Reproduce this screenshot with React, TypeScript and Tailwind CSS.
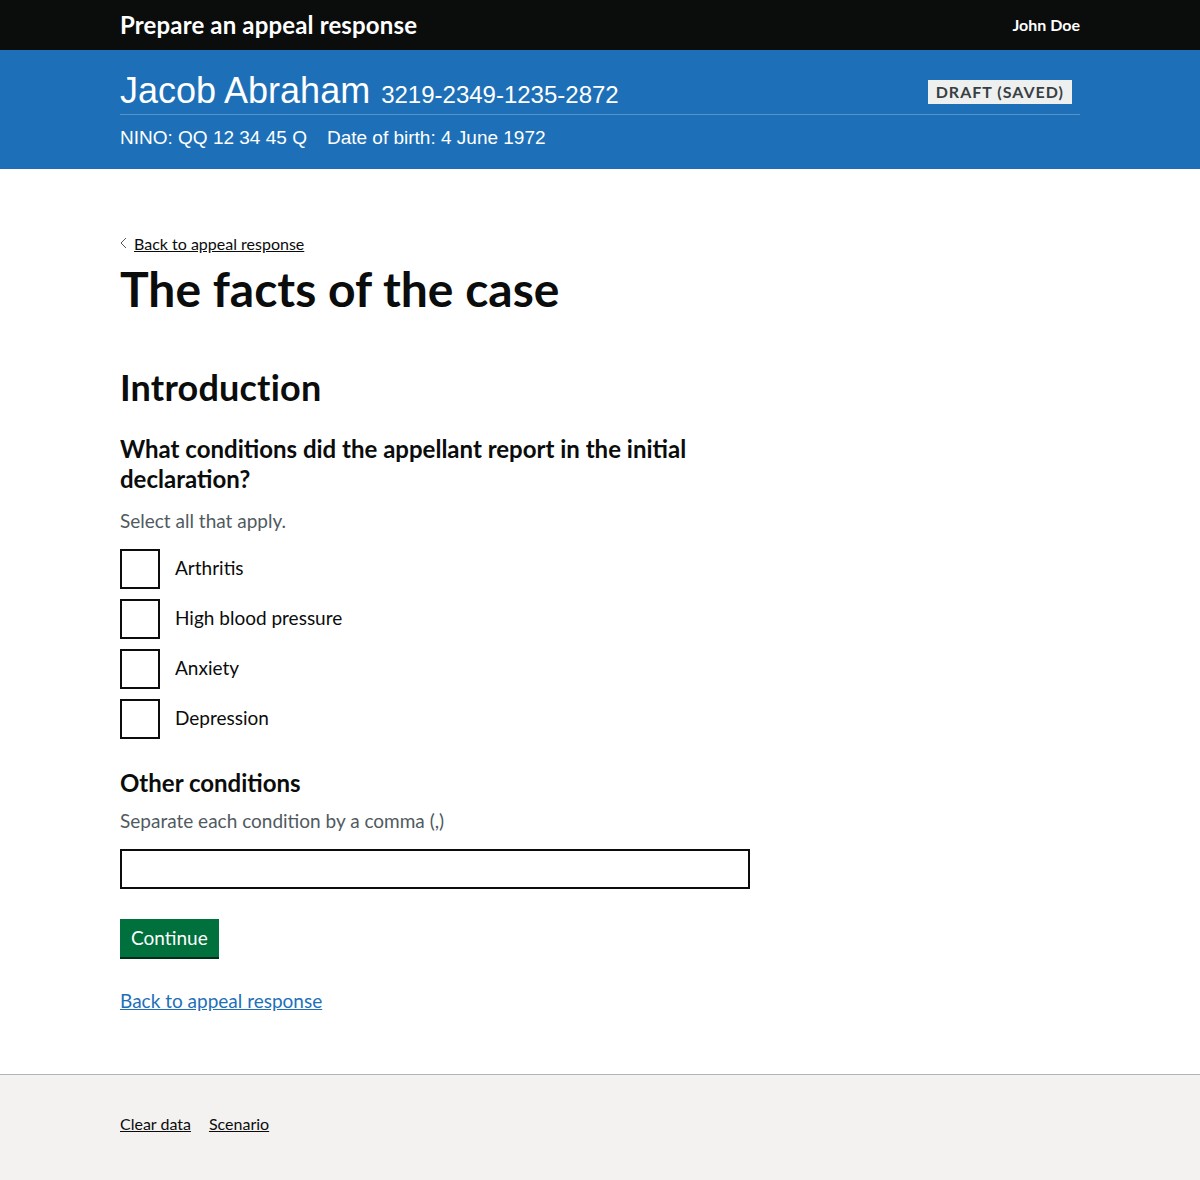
const gds = "font-['Lato','Noto_Sans',sans-serif]";

function Checkbox({ label }: { label: string }) {
  return (
    <label className="flex items-center">
      <span className="w-10 h-10 border-2 border-[#0b0c0c] bg-white shrink-0" />
      <span className="pl-[15px] text-[19px] text-[#0b0c0c]">{label}</span>
    </label>
  );
}

export default function App() {
  return (
    <div className={`min-h-[1180px] bg-white flex flex-col ${gds}`}>
      {/* Header */}
      <header className="bg-[#0b0c0c] h-[50px]">
        <div className="max-w-[960px] mx-auto h-full flex items-center justify-between">
          <span className="text-white font-bold text-[24px] tracking-[0.15px]">Prepare an appeal response</span>
          <span className="text-white font-bold text-[16px]">John Doe</span>
        </div>
      </header>

      {/* Claimant banner */}
      <section className="bg-[#1d70b8] h-[119px] font-['Liberation_Sans',Arial,sans-serif] text-white">
        <div className="max-w-[960px] mx-auto pt-[21px]">
          <div className="flex items-end justify-between border-b border-[#5694ca] pb-[1px]">
            <div className="flex items-baseline gap-[11px]">
              <span className="text-[36px] leading-[40px]">Jacob Abraham</span>
              <span className="text-[24px]">3219-2349-1235-2872</span>
            </div>
            <span className={`${gds} mr-2 mb-[9px] bg-[#eef0f0] text-[#383f43] font-bold text-[16px] tracking-[1px] px-2 h-[24px] leading-[24px]`}>
              DRAFT (SAVED)
            </span>
          </div>
          <div className="flex gap-[20px] text-[19px] pt-[9px]">
            <span>NINO: QQ 12 34 45 Q</span>
            <span>Date of birth: 4 June 1972</span>
          </div>
        </div>
      </section>

      {/* Main */}
      <main className="flex-1 max-w-[960px] w-full mx-auto pt-[62px] pb-[50px] text-[#0b0c0c]">
        <a href="#" className="inline-flex items-center gap-[7px] text-[16px] underline">
          <svg width="7" height="12" viewBox="0 0 7 12" className="mt-[-2px]">
            <path d="M6 1 L1 6 L6 11" fill="none" stroke="#505a5f" strokeWidth="1" />
          </svg>
          Back to appeal response
        </a>
        <h1 className="mt-[7px] text-[48px] font-bold leading-[52px]">The facts of the case</h1>

        <div className="w-[640px]">
          <h2 className="mt-[52px] text-[36px] font-bold leading-[40px] tracking-[0.2px]">Introduction</h2>
          <h3 className="mt-[27px] text-[24px] font-bold leading-[30px]">
            What conditions did the appellant report in the initial declaration?
          </h3>
          <p className="mt-[13px] text-[19px] text-[#505a5f]">Select all that apply.</p>
          <div className="mt-[13px] flex flex-col gap-[10px]">
            <Checkbox label="Arthritis" />
            <Checkbox label="High blood pressure" />
            <Checkbox label="Anxiety" />
            <Checkbox label="Depression" />
          </div>

          <h3 className="mt-[29px] text-[24px] font-bold leading-[30px]">Other conditions</h3>
          <p className="mt-[9px] text-[19px] text-[#505a5f]">Separate each condition by a comma (,)</p>
          <input type="text" className="mt-[14px] block w-[630px] h-[40px] border-2 border-[#0b0c0c] px-[5px] text-[19px] outline-none" />

          <button className="mt-[30px] bg-[#00703c] text-white text-[19px] h-[38px] px-[11px] shadow-[0_2px_0_#002d18]">
            Continue
          </button>

          <div className="mt-[30px]">
            <a href="#" className="text-[19px] text-[#1d70b8] underline">Back to appeal response</a>
          </div>
        </div>
      </main>

      {/* Footer */}
      <footer className="bg-[#f3f2f1] border-t border-[#b1b4b6] h-[106px]">
        <div className="max-w-[960px] mx-auto pt-[37px] flex gap-[18px] text-[16px] text-[#0b0c0c]">
          <a href="#" className="underline">Clear data</a>
          <a href="#" className="underline">Scenario</a>
        </div>
      </footer>
    </div>
  );
}
